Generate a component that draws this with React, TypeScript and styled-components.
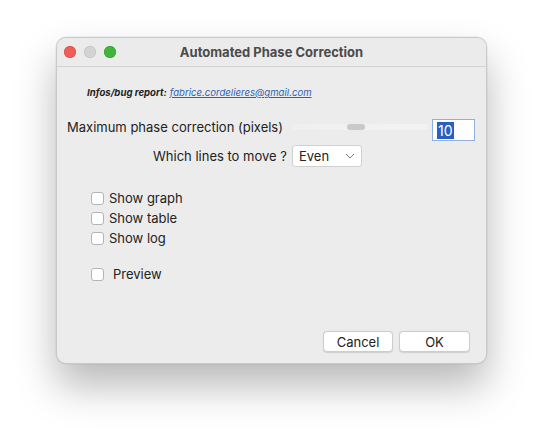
import React from "react";
import styled, { createGlobalStyle } from "styled-components";

const Global = createGlobalStyle`
  html, body { margin: 0; padding: 0; background: #ffffff; }
  body { font-family: Inter, "Noto Sans", Roboto, sans-serif; -webkit-font-smoothing: antialiased; }
`;

const Page = styled.div`
  width: 543px;
  height: 438px;
  padding: 37px 0 0 56px;
  box-sizing: border-box;
`;

const Window = styled.div`
  width: 431px;
  height: 327px;
  box-sizing: border-box;
  background: #ececec;
  border-radius: 10px;
  border: 1px solid #c9c9c9;
  box-shadow: 0 22px 40px rgba(0, 0, 0, 0.28), 0 0 0 0.5px rgba(0, 0, 0, 0.08);
  display: flex;
  flex-direction: column;
  overflow: hidden;
`;

const TitleBar = styled.div`
  height: 28px;
  border-bottom: 1px solid #d3d3d3;
  display: flex;
  align-items: center;
  position: relative;
  padding-left: 7px;
  background: #ebebeb;
`;

const Lights = styled.div`
  display: flex;
  gap: 8px;
`;

const Light = styled.span<{ $c: string; $b: string }>`
  width: 12px;
  height: 12px;
  border-radius: 50%;
  background: ${(p) => p.$c};
  box-shadow: inset 0 0 0 0.5px ${(p) => p.$b};
`;

const Title = styled.div`
  position: absolute;
  left: 0;
  right: 0;
  text-align: center;
  font-size: 13px;
  font-weight: 700;
  color: #4a4a4a;
  pointer-events: none;
`;

const Body = styled.div`
  flex: 1;
  display: flex;
  flex-direction: column;
  padding: 0 11px 11px 10px;
`;

const InfoRow = styled.div`
  margin-top: 20px;
  padding-left: 20px;
  font-size: 9.6px;
  line-height: 12px;
  font-style: italic;
  color: #1e1e1e;
`;

const InfoLabel = styled.span`
  font-weight: 700;
  margin-right: 3px;
`;

const Link = styled.a`
  color: #2f5fae;
  text-decoration: underline;
`;

const ParamRow = styled.div`
  margin-top: 20px;
  display: flex;
  align-items: center;
  height: 22px;
`;

const Label = styled.span`
  font-size: 13px;
  color: #222;
  white-space: nowrap;
`;

const ParamLabel = styled(Label)`
  padding-bottom: 6px;
`;

const Slider = styled.div`
  flex: 1;
  height: 6px;
  margin: 0 4px 7px 8px;
  position: relative;
  background: linear-gradient(to right, #efefef, #f3f3f3);
  border-radius: 3px;
`;

const Thumb = styled.div<{ $left: number }>`
  position: absolute;
  top: 0;
  left: ${(p) => p.$left}px;
  width: 18px;
  height: 6px;
  border-radius: 3px;
  background: #c9c9c9;
`;

const NumField = styled.div`
  width: 43px;
  height: 22px;
  box-sizing: border-box;
  background: #fff;
  border: 1px solid #8fb1dc;
  display: flex;
  align-items: center;
  padding-left: 4px;
`;

const Selected = styled.span`
  background: #2760c0;
  color: #fff;
  font-size: 14px;
  line-height: 17px;
  padding: 0 1px;
`;

const SelectRow = styled.div`
  margin-top: 4px;
  display: flex;
  align-items: center;
  padding-left: 86px;
  height: 22px;
  gap: 5px;
`;

const Select = styled.div`
  width: 70px;
  height: 22px;
  box-sizing: border-box;
  background: #fff;
  border: 1px solid #d0d0d0;
  border-radius: 3px;
  display: flex;
  align-items: center;
  justify-content: space-between;
  padding: 0 6px 0 6px;
  font-size: 13px;
  color: #222;
`;

const Checks = styled.div`
  margin-top: 21px;
  padding-left: 24px;
  display: flex;
  flex-direction: column;
`;

const CheckRow = styled.label<{ $gap: number; $top?: number }>`
  display: flex;
  align-items: center;
  height: 20px;
  gap: ${(p) => p.$gap}px;
  margin-top: ${(p) => p.$top ?? 0}px;
`;

const Box = styled.span`
  width: 13px;
  height: 13px;
  box-sizing: border-box;
  background: #fff;
  border: 1px solid #b4b4b4;
  border-radius: 3px;
`;

const Buttons = styled.div`
  margin-top: auto;
  display: flex;
  justify-content: flex-end;
  gap: 6px;
  padding-right: 5px;
`;

const Button = styled.button<{ $w: number }>`
  width: ${(p) => p.$w}px;
  height: 21px;
  box-sizing: border-box;
  background: #fff;
  border: 1px solid #cdcdcd;
  border-radius: 4px;
  box-shadow: 0 0.5px 1px rgba(0, 0, 0, 0.12);
  font-family: inherit;
  font-size: 13px;
  color: #222;
  padding: 0;
`;

export default function App() {
  return (
    <>
      <Global />
      <Page>
        <Window>
          <TitleBar>
            <Lights>
              <Light $c="#ee5f57" $b="#d9463f" />
              <Light $c="#d3d3d3" $b="#bdbdbd" />
              <Light $c="#3fb63b" $b="#2e9a2b" />
            </Lights>
            <Title>Automated Phase Correction</Title>
          </TitleBar>
          <Body>
            <InfoRow>
              <InfoLabel>Infos/bug report:</InfoLabel>
              <Link>fabrice.cordelieres@gmail.com</Link>
            </InfoRow>
            <ParamRow>
              <ParamLabel>Maximum phase correction (pixels)</ParamLabel>
              <Slider>
                <Thumb $left={56} />
              </Slider>
              <NumField>
                <Selected>10</Selected>
              </NumField>
            </ParamRow>
            <SelectRow>
              <Label>Which lines to move ?</Label>
              <Select>
                <span>Even</span>
                <svg width="10" height="6" viewBox="0 0 10 6">
                  <path d="M1 1 L5 5 L9 1" fill="none" stroke="#777" strokeWidth="1" />
                </svg>
              </Select>
            </SelectRow>
            <Checks>
              <CheckRow $gap={5}>
                <Box />
                <Label>Show graph</Label>
              </CheckRow>
              <CheckRow $gap={5}>
                <Box />
                <Label>Show table</Label>
              </CheckRow>
              <CheckRow $gap={5}>
                <Box />
                <Label>Show log</Label>
              </CheckRow>
              <CheckRow $gap={9} $top={16}>
                <Box />
                <Label>Preview</Label>
              </CheckRow>
            </Checks>
            <Buttons>
              <Button $w={70}>Cancel</Button>
              <Button $w={71}>OK</Button>
            </Buttons>
          </Body>
        </Window>
      </Page>
    </>
  );
}
